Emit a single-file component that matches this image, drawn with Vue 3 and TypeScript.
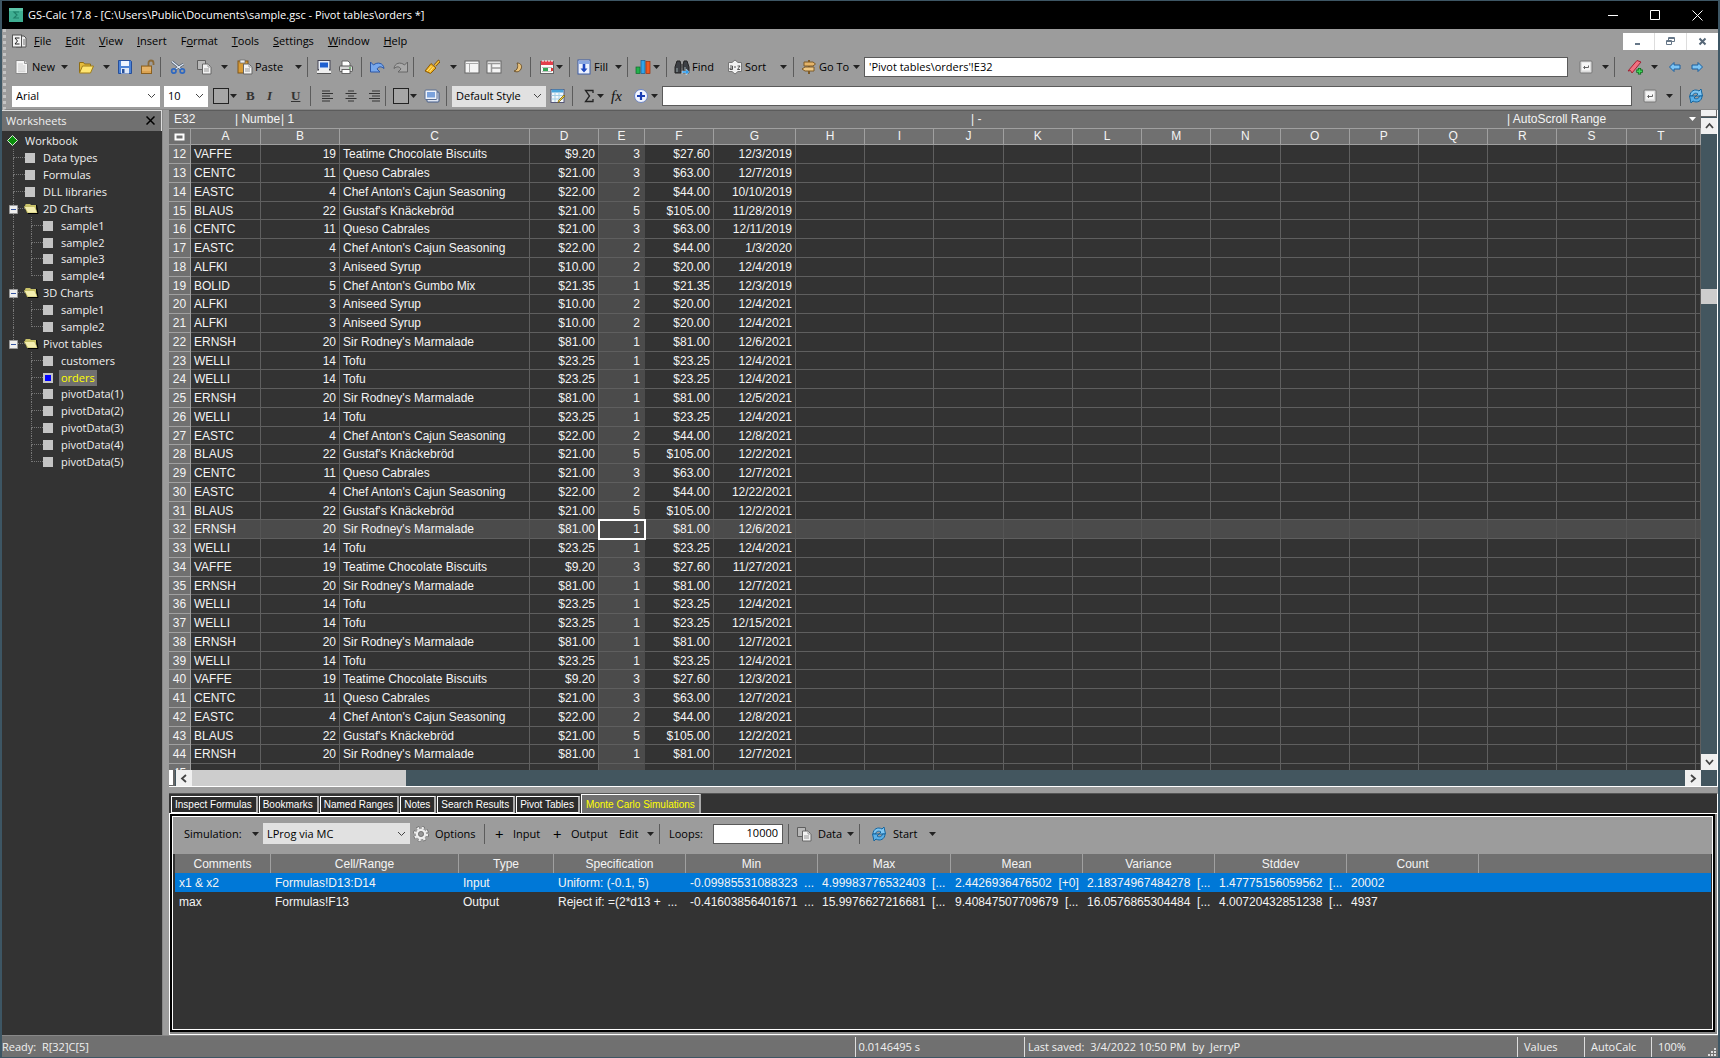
<script setup lang="ts">
import { h, type FunctionalComponent } from 'vue'

type Kind = 'btn' | 'drop' | 'sep' | 'select' | 'input' | 'text'
interface Tool {
  kind: Kind
  w: number
  icon?: string
  label?: string
  name?: string
  look?: string
  value?: string
}

const icons: Record<string, string> = {
  app: '<rect x="1" y="1" width="14" height="14" fill="#3fae92"/><path d="M1 1h14v3H1z" fill="#5cc4a8"/><path d="M11 5H6l3 3-3 3h5" fill="none" stroke="#1f7f68" stroke-width="1.2"/>',
  doc: '<path d="M5 3h8l2 2v9H5z" fill="#eee" stroke="#555"/><rect x="1.500" y="2" width="9" height="12" fill="#f4f4f4" stroke="#555"/><path d="M8.500 5H4l2.500 3L4 11h4.500" fill="none" stroke="#222"/><path d="M12 7h2M12 9h2M12 11h2" stroke="#777"/>',
  new: '<path d="M2 1.500h8.500l3 3v10H2z" fill="#f6f6f6" stroke="#888"/><path d="M10.500 1.500v3h3" fill="#ddd" stroke="#999"/><path d="M4 5h5M4 7h7.500M4 9h7.500M4 11h7.500M4 12.700h7.500" stroke="#c2c2c2" stroke-width=".8"/>',
  open: '<path d="M1.500 14V3.500h4l1 1.500h6v3" fill="#e6bd3d" stroke="#8f6d12"/><path d="M1.500 14 4.500 7h11l-3 7z" fill="#ffe672" stroke="#a17d18"/>',
  save: '<path d="M1.500 1.500h12l1 1v12h-13z" fill="#4d83d6" stroke="#264f9b"/><rect x="4" y="2" width="8" height="5" fill="#eef4ff"/><rect x="4" y="9" width="8" height="5.500" fill="#dfe8f7"/><rect x="5" y="10" width="2.500" height="4" fill="#28509a"/>',
  lock: '<path d="M8.500 7V4a2.500 2.500 0 0 1 5 0v2" fill="none" stroke="#8a6a3a" stroke-width="1.800"/><rect x="1.500" y="7" width="10" height="7.500" fill="#dba352" stroke="#8a6021"/><path d="M2 9h9M2 11h9" stroke="#f0c27c"/>',
  cut: '<path d="M2 2.500l9.500 8M13.500 5 5 10.500" stroke="#4a5a70" stroke-width="2.600"/><path d="M2 2.500l9.500 8M13.500 5 5 10.500" stroke="#e4ecf6" stroke-width="1.200"/><circle cx="3.800" cy="12" r="2.200" fill="none" stroke="#2f68c0" stroke-width="1.700"/><circle cx="12.300" cy="12" r="2.200" fill="none" stroke="#2f68c0" stroke-width="1.700"/>',
  copy: '<path d="M1.500 1.500h8v9h-8z" fill="#b9b9b9" stroke="#5e5e5e"/><path d="M6.500 5h5.500l3 3v7H6.500z" fill="#f2f2f2" stroke="#666"/><path d="M12 5v3h3M8 10h5M8 12h5" fill="none" stroke="#999"/>',
  paste: '<rect x="1" y="2" width="10" height="12" fill="#d89b35" stroke="#80571a"/><rect x="3" y="1" width="5" height="3" fill="#eee" stroke="#666" stroke-width=".7"/><path d="M6.500 5h5.500l3 3v7H6.500z" fill="#f5f5f5" stroke="#666"/><path d="M12 5v3h3M8 10h5M8 12h5" fill="none" stroke="#999"/>',
  monitor: '<rect x="2" y="1.500" width="12" height="9" fill="#e8eef8" stroke="#445"/><rect x="4" y="3.500" width="8" height="5" fill="#1e5fd0"/><path d="M1 13h14M3 11h10" stroke="#eee" stroke-width="2"/><path d="M1 14.500h14" stroke="#555"/>',
  print: '<path d="M4 7V2h6l2 2v3" fill="#fff" stroke="#666"/><rect x="1.500" y="7" width="13" height="5.500" rx="1" fill="#d7d7d7" stroke="#555"/><rect x="4" y="10.500" width="8" height="4" fill="#fff" stroke="#666"/><path d="M11 9h2" stroke="#292"/>',
  undo: '<path d="M1.500 3v10H11L8 10c1.500-2.500 4-3 7-.5C14.500 4 8.500 2.500 4.500 6z" fill="#78a8ec" stroke="#2c57a6"/>',
  redo: '<path d="M14.500 3v10H5l3-3C6.500 7.500 4 7 1 9.500 1.500 4 7.500 2.500 11.500 6z" fill="#a9a9a9" stroke="#666"/>',
  brush: '<path d="M15.500 1.500 11 6.500" stroke="#7b4e0c" stroke-width="3"/><path d="M15 2 11 6.500" stroke="#f5c33d" stroke-width="1.500"/><path d="M7 4.500l5 4.500-5.500 5.500L1 12z" fill="#f2b41f" stroke="#8a5a08"/><path d="M3 12l4.500-5M5.500 13l4-5" stroke="#ffe488"/>',
  pane: '<rect x="1" y="2" width="14" height="12" fill="#f5f5f5" stroke="#666"/><path d="M1.500 4.500h13M5.500 4v10" stroke="#aaa"/>',
  split: '<rect x="1" y="2" width="14" height="12" fill="#f5f5f5" stroke="#666"/><path d="M1.500 4.500h13M5.500 4v10M5.500 9h9.500" stroke="#999" stroke-width="1.500"/>',
  moon: '<path d="M5 4c4 0 5.500 3 4 6-1.500 3-4.500 3.500-7 2 3.500-.5 4.500-5 3-8z" fill="#e9c27b" stroke="#6f5630"/>',
  calendar: '<rect x="1.500" y="2.500" width="13" height="12" fill="#fafafa" stroke="#666"/><rect x="2" y="2" width="12" height="4" fill="#e23f4c"/><path d="M4 1v2M7 1v2M10 1v2M13 1v2" stroke="#fff"/><path d="M3 8.500h10M3 12.500h10" stroke="#bbb"/><rect x="4" y="9" width="5" height="3" fill="#35a455"/><path d="M13 9v3" stroke="#d33" stroke-width="2"/>',
  fill: '<rect x="2" y="1" width="12" height="14" fill="#eef3ff" stroke="#3d5da5"/><path d="M2.500 3.500h11" stroke="#8aa7e0" stroke-width="3"/><path d="M8 5v7" stroke="#1e49c0" stroke-width="2.600"/><path d="M4.500 9.500h7L8 13.500z" fill="#1e49c0"/>',
  chart: '<rect x="1" y="8" width="4" height="6.500" fill="#22b14c" stroke="#0c6b2a" stroke-width=".7"/><rect x="6" y="1.500" width="4" height="13" fill="#2fa4ea" stroke="#155c94" stroke-width=".7"/><rect x="11" y="2.500" width="4" height="12" fill="#ee5a24" stroke="#9a2f0a" stroke-width=".7"/>',
  find: '<path d="M3 2h3l1 4v8H1V8zM10 2h3l2 6v6H9V6z" fill="#3c3f44" stroke="#222"/><path d="M7 5h2v4H7z" fill="#555"/><path d="M3 9v4M11 8v3" stroke="#9aa"/><path d="M8 12h4v-2l3.500 3-3.500 3v-2H8z" fill="#2f9bea" stroke="#fff" stroke-width=".4"/>',
  sort: '<path d="M1.500 3.500H5L8 1l3 2.500h3.500v9H11L8 15l-3-2.500H1.500z" fill="#f2f2f2" stroke="#777"/><path d="M3 7h2.500v3.500H3V9h2.500M10.500 7H13l-2.500 3.500H13M7 8h2" fill="none" stroke="#444" stroke-width=".9"/>',
  goto: '<path d="M8 1v14" stroke="#7d5a28" stroke-width="2"/><path d="M3 3h9l2.500 2L12 7H3z" fill="#e5b56a" stroke="#7d5a28"/><path d="M13 8H4L1 10l3 2h9z" fill="#f0c984" stroke="#7d5a28"/>',
  enter: '<rect x="2" y="2" width="12" height="12" rx="1" fill="#ddd" stroke="#777"/><rect x="4" y="3.500" width="8" height="8" fill="#f6f6f6"/><path d="M10.500 6.500v2H6M7 7 5.500 8.500 7 10" fill="none" stroke="#666"/>',
  bookmark: '<path d="M10 1.500 14 3 5 14l-1.500-2.500L1 12z" fill="#f27080" stroke="#a32233"/><path d="M12.500 9v6.500M9.300 12.200h6.500" stroke="#0b6b1b" stroke-width="3.200"/><path d="M12.500 9.700v5M10 12.200h5" stroke="#3fd257" stroke-width="1.600"/>',
  back: '<path d="M2.500 8 7 3.500V6h6v4H7v2.500z" fill="#7cc4f4" stroke="#1a5f9e"/>',
  forward: '<path d="M13.500 8 9 3.500V6H3v4h6v2.500z" fill="#7cc4f4" stroke="#1a5f9e"/>',
  swatch: '<rect x=".5" y=".5" width="15" height="15" fill="#a6a6a6" stroke="#222"/>',
  left: '<path d="M2 3h8M2 5.500h11M2 8h8M2 10.500h11M2 13h8" stroke="#333" stroke-width="1.200"/>',
  center: '<path d="M5 3h6M2.500 5.500h11M5 8h6M2.500 10.500h11M5 13h6" stroke="#333" stroke-width="1.200"/>',
  right: '<path d="M6 3h8M3 5.500h11M6 8h8M3 10.500h11M6 13h8" stroke="#333" stroke-width="1.200"/>',
  frame: '<rect x="3" y="4" width="12" height="10" rx="1" fill="#dfe6f2" stroke="#445d8a"/><rect x="1" y="2" width="12" height="9.500" rx="1" fill="#f0f4fb" stroke="#5a6e92"/><rect x="3" y="4" width="8" height="5.500" fill="#7ba2dc"/>',
  style: '<rect x="1" y="1.500" width="13" height="13" fill="#f3f8fb" stroke="#557"/><path d="M1.500 3h12" stroke="#49a5dc" stroke-width="3"/><path d="M5 4v10M9 4v10M1.500 7.500h12M1.500 11h12" stroke="#a5cfe6"/><path d="M15 8 9.500 13.500 8 15l.5-2.500L14 7z" fill="#f3d13e" stroke="#7d6410" stroke-width=".8"/>',
  sigma: '<path d="M12 5V2.500H4.500L8.500 8l-4 5.500H12V11" fill="none" stroke="#222" stroke-width="1.300"/>',
  plus: '<circle cx="8" cy="8" r="6.500" fill="#f2f5ff" stroke="#6e86c4"/><path d="M8 4v8M4 8h8" stroke="#1b3fb4" stroke-width="2.200"/>',
  refresh: '<path d="M2 8C2 3 7 .5 11 3l2-2 1.500 7H8l2-2C8 4.500 5 5 4.500 8z" fill="#7fc6f2" stroke="#15659f"/><path d="M14 8c0 5-5 7.500-9 5l-2 2-1.500-7H8l-2 2c2 1.500 5 1 5.500-2z" fill="#5bb0e8" stroke="#15659f"/>',
  gear: '<circle cx="8" cy="8" r="6.200" fill="none" stroke="#666" stroke-width="3.400" stroke-dasharray="2.600 2.270"/><circle cx="8" cy="8" r="6" fill="none" stroke="#eee" stroke-width="2.400" stroke-dasharray="2.200 2.512"/><circle cx="8" cy="8" r="4" fill="none" stroke="#eee" stroke-width="2.400"/><circle cx="8" cy="8" r="2.500" fill="#999" stroke="#666" stroke-width=".7"/>',
}

const sep = (w: number): Tool => ({ kind: 'sep', w })
const drop = (w: number): Tool => ({ kind: 'drop', w })
const btn = (icon: string, w: number, label?: string): Tool => ({ kind: 'btn', icon, w, label, name: icon })
const glyph = (label: string, look: string, w: number, name: string): Tool => ({ kind: 'btn', label, look, w, name })

const ToolStrip: FunctionalComponent<{ items: Tool[] }> = (props) =>
  props.items.map((t) => {
    const style = t.w ? { width: t.w + 'px' } : {}
    if (t.kind === 'sep') return h('span', { class: 'sep', style })
    if (t.kind === 'text') return h('span', { class: 'caption', style }, t.label)
    if (t.kind === 'drop')
      return h('button', { class: 'tool', style, 'aria-label': 'More' }, [
        h('svg', { width: 7, height: 4, viewBox: '0 0 7 4', innerHTML: '<path d="M0 0h7L3.500 4z" fill="#222"/>' }),
      ])
    if (t.kind === 'input')
      return h('input', { class: ['field', t.w ? 'fixed' : 'wide'], style, value: t.value, 'aria-label': t.name })
    if (t.kind === 'select')
      return h('span', { class: ['combo', t.look], style }, [
        h('select', { 'aria-label': t.name }, [h('option', t.value)]),
        h('svg', { width: 9, height: 6, viewBox: '0 0 9 6', innerHTML: '<path d="M1 1l3.500 3.500L8 1" fill="none" stroke="#444"/>' }),
      ])
    return h('button', { class: 'tool', style, 'aria-label': t.label ?? t.name }, [
      t.icon ? h('svg', { width: 16, height: 16, viewBox: '0 0 16 16', innerHTML: icons[t.icon] }) : null,
      t.label ? h('span', { class: t.look }, t.label) : null,
    ])
  })
ToolStrip.props = ['items']

const mainBar: Tool[] = [
  btn('new', 47, 'New'), drop(17), btn('open', 25), drop(14), btn('save', 23), btn('lock', 20), sep(10),
  btn('cut', 26), btn('copy', 25), drop(16), btn('paste', 58, 'Paste'), drop(12), sep(9),
  btn('monitor', 22), btn('print', 23), sep(8), btn('undo', 24), btn('redo', 20), sep(11),
  btn('brush', 26), drop(14), btn('pane', 22), btn('split', 26), btn('moon', 18), sep(9),
  btn('calendar', 17), drop(13), sep(7), btn('fill', 39, 'Fill'), drop(12), sep(8),
  btn('chart', 18), drop(13), sep(8), btn('find', 53, 'Find'), btn('sort', 53, 'Sort'), drop(13), sep(8),
  btn('goto', 52, 'Go To'), drop(11),
  { kind: 'input', w: 0, value: "'Pivot tables\\orders'!E32", name: 'Address' },
  { kind: 'text', w: 10 }, btn('enter', 24), drop(12), sep(13), btn('bookmark', 24), drop(16), btn('back', 22), btn('forward', 29),
]

const formatBar: Tool[] = [
  { kind: 'select', w: 148, value: 'Arial', name: 'Font' },
  { kind: 'text', w: 4 },
  { kind: 'select', w: 44, value: '10', name: 'Font size' },
  { kind: 'text', w: 5 },
  btn('swatch', 17), drop(16), glyph('B', 'bold', 21, 'Bold'), glyph('I', 'italic', 24, 'Italic'),
  glyph('U', 'under', 19, 'Underline'), sep(10),
  btn('left', 23), btn('center', 23), btn('right', 19), sep(8), btn('swatch', 17), drop(14), btn('frame', 22), sep(6),
  { kind: 'select', w: 94, value: 'Default Style', name: 'Style', look: 'pale' },
  { kind: 'text', w: 4 },
  btn('style', 22), sep(9), btn('sigma', 16), drop(14), glyph('fx', 'fx', 22, 'Function'), btn('plus', 18), drop(11),
  { kind: 'input', w: 0, value: '', name: 'Formula' },
  { kind: 'text', w: 10 }, btn('enter', 24), drop(14), sep(8), btn('refresh', 30),
]

const simBar: Tool[] = [
  { kind: 'text', w: 68, label: 'Simulation:' }, drop(11),
  { kind: 'select', w: 147, value: 'LProg via MC', name: 'Simulation', look: 'pale' },
  { kind: 'text', w: 3 },
  btn('gear', 71, 'Options'), sep(11), glyph('+', 'cross', 18, 'Add input'), glyph('Input', '', 40, 'Input'),
  glyph('+', 'cross', 18, 'Add output'), glyph('Output', '', 48, 'Output'), glyph('Edit', '', 28, 'Edit'), drop(12), sep(10),
  { kind: 'text', w: 44, label: 'Loops:' }, { kind: 'input', w: 70, value: '10000', name: 'Loops' },
  { kind: 'text', w: 5 }, sep(8),
  btn('copy', 51, 'Data'), drop(12), sep(12), btn('refresh', 58, 'Start'), drop(12),
]

const menus = ['File', 'Edit', 'View', 'Insert', 'Format', 'Tools', 'Settings', 'Window', 'Help'].map((m) => {
  const at = m === 'Format' ? 1 : 0
  return { a: m.slice(0, at), key: m[at], b: m.slice(at + 1) }
})

interface Node { label: string; level: number; folder?: boolean; last?: boolean; rail?: boolean; on?: boolean }
const kids = (names: string[], rail: boolean): Node[] =>
  names.map((label, i) => ({ label, level: 2, rail, last: i === names.length - 1, on: label === 'orders' }))
const tree: Node[] = [
  { label: 'Data types', level: 1 }, { label: 'Formulas', level: 1 }, { label: 'DLL libraries', level: 1 },
  { label: '2D Charts', level: 1, folder: true }, ...kids(['sample1', 'sample2', 'sample3', 'sample4'], true),
  { label: '3D Charts', level: 1, folder: true }, ...kids(['sample1', 'sample2'], true),
  { label: 'Pivot tables', level: 1, folder: true, last: true },
  ...kids(['customers', 'orders', 'pivotData(1)', 'pivotData(2)', 'pivotData(3)', 'pivotData(4)', 'pivotData(5)'], false),
]

const letters = 'ABCDEFGHIJKLMNOPQRST'.split('')
const fixedCols = [22, 70, 79, 190, 69, 46, 69, 82]
const blanks = Array.from({ length: 14 })

const lines: Record<string, string[]> = {
  VAFFE: ['19', 'Teatime Chocolate Biscuits', '$9.20', '3', '$27.60'],
  CENTC: ['11', 'Queso Cabrales', '$21.00', '3', '$63.00'],
  EASTC: ['4', "Chef Anton's Cajun Seasoning", '$22.00', '2', '$44.00'],
  BLAUS: ['22', "Gustaf's Knäckebröd", '$21.00', '5', '$105.00'],
  ALFKI: ['3', 'Aniseed Syrup', '$10.00', '2', '$20.00'],
  BOLID: ['5', "Chef Anton's Gumbo Mix", '$21.35', '1', '$21.35'],
  ERNSH: ['20', "Sir Rodney's Marmalade", '$81.00', '1', '$81.00'],
  WELLI: ['14', 'Tofu', '$23.25', '1', '$23.25'],
}
const orders = `VAFFE 12/3/2019,CENTC 12/7/2019,EASTC 10/10/2019,BLAUS 11/28/2019,CENTC 12/11/2019,EASTC 1/3/2020,
ALFKI 12/4/2019,BOLID 12/3/2019,ALFKI 12/4/2021,ALFKI 12/4/2021,ERNSH 12/6/2021,WELLI 12/4/2021,WELLI 12/4/2021,
ERNSH 12/5/2021,WELLI 12/4/2021,EASTC 12/8/2021,BLAUS 12/2/2021,CENTC 12/7/2021,EASTC 12/22/2021,BLAUS 12/2/2021,
ERNSH 12/6/2021,WELLI 12/4/2021,VAFFE 11/27/2021,ERNSH 12/7/2021,WELLI 12/4/2021,WELLI 12/15/2021,ERNSH 12/7/2021,
WELLI 12/4/2021,VAFFE 12/3/2021,CENTC 12/7/2021,EASTC 12/8/2021,BLAUS 12/2/2021,ERNSH 12/7/2021`
const rows = orders.split(',').map((o, i) => {
  const [code, date] = o.trim().split(' ')
  return { n: i + 12, cells: [code, ...lines[code], date] }
})
rows.push({ n: 45, cells: ['', '', '', '', '', '', ''] })

const tabs = ['Inspect Formulas', 'Bookmarks', 'Named Ranges', 'Notes', 'Search Results', 'Pivot Tables', 'Monte Carlo Simulations']
const simCols = ['Comments', 'Cell/Range', 'Type', 'Specification', 'Min', 'Max', 'Mean', 'Variance', 'Stddev', 'Count', '']
const simWidths = [96, 188, 95, 132, 132, 133, 132, 132, 132, 132]
const simRows = [
  ['x1 & x2', 'Formulas!D13:D14', 'Input', 'Uniform: (-0.1, 5)', '-0.09985531088323\u00a0 ...', '4.99983776532403\u00a0 [...', '2.4426936476502\u00a0 [+0]', '2.18374967484278\u00a0 [...', '1.47775156059562\u00a0 [...', '20002', ''],
  ['max', 'Formulas!F13', 'Output', 'Reject if: =(2*d13 +\u00a0 ...', '-0.41603856401671\u00a0 ...', '15.9976627216681\u00a0 [...', '9.40847507709679\u00a0 [...', '16.0576865304484\u00a0 [...', '4.00720432851238\u00a0 [...', '4937', ''],
]
</script>

<template>
  <div class="window">
    <header class="title">
      <svg width="16" height="16" viewBox="0 0 16 16" v-html="icons.app" />
      <h1>GS-Calc 17.8 - [C:\Users\Public\Documents\sample.gsc - Pivot tables\orders *]</h1>
      <button aria-label="Minimize"><svg width="11" height="11"><path d="M0 5.5h10" stroke="#fff" /></svg></button>
      <button aria-label="Maximize"><svg width="11" height="11"><path d="M.5.5h9v9h-9z" fill="none" stroke="#fff" /></svg></button>
      <button aria-label="Close"><svg width="11" height="11"><path d="M.5.5l10 10M10.5.5l-10 10" stroke="#fff" /></svg></button>
    </header>

    <div class="bars">
      <nav class="menu">
        <svg width="16" height="16" viewBox="0 0 16 16" v-html="icons.doc" />
        <button v-for="m in menus" :key="m.key + m.b">{{ m.a }}<u>{{ m.key }}</u>{{ m.b }}</button>
        <div class="mdi">
          <button aria-label="Minimize document"><svg width="9" height="9"><path d="M1 7h5" stroke="#678" stroke-width="2" /></svg></button>
          <button aria-label="Restore document"><svg width="9" height="9"><path d="M2.500 3V.5h6v4H6M.5 3.500h5v4h-5zM2.500 1.500h6M.5 4.500h5" fill="none" stroke="#678" /></svg></button>
          <button aria-label="Close document"><svg width="9" height="9"><path d="M1.500 1.500l6 6M7.500 1.500l-6 6" stroke="#567" stroke-width="2" /></svg></button>
        </div>
      </nav>
      <div class="bar main"><ToolStrip :items="mainBar" /></div>
      <div class="bar format"><ToolStrip :items="formatBar" /></div>
    </div>

    <div class="body">
      <aside class="side">
        <div class="side-head">
          <h2>Worksheets</h2>
          <button aria-label="Close panel"><svg width="9" height="9"><path d="M.5.5l8 8M8.500.5l-8 8" stroke="#000" stroke-width="1.500" /></svg></button>
        </div>
        <ul class="tree">
          <li class="root">
            <svg width="11" height="11"><path d="M5.500.5l5 5-5 5-5-5z" fill="#0a8f0a" stroke="#d8f0d8" /></svg>
            <span>Workbook</span>
          </li>
          <li v-for="(n, i) in tree" :key="i">
            <i v-if="n.level === 2" class="rail" :class="{ none: !n.rail }"><b></b><b></b></i>
            <i class="branch" :class="{ last: n.last }">
              <b></b><b></b>
              <svg v-if="n.folder" class="toggle" width="9" height="9"><path d="M.5.5h8v8h-8z" fill="#eee" stroke="#999" /><path d="M2 4.500h5" stroke="#3454a0" /></svg>
            </i>
            <svg v-if="n.folder" class="folder" width="15" height="11"><path d="M1 2l1-1h4l1 1h5v8H3z" fill="#c9c26a" /><path d="M0 3.500h10.500L13.500 10H4z" fill="#f4eeb0" stroke="#b5ae4e" stroke-width=".6" /><path d="M12.500 2l1.500 8.500H4" fill="none" stroke="#000" /></svg>
            <em v-else class="sheet" :class="{ on: n.on }"></em>
            <span :class="{ on: n.on }">{{ n.label }}</span>
          </li>
        </ul>
      </aside>

      <main class="work">
        <section class="sheetview">
          <div class="grid-side">
            <div class="info">
              <span>E32</span><span>| Numbe</span><span>| 1</span><span>| -</span><span>| AutoScroll Range</span>
              <svg width="7" height="4"><path d="M0 0h7L3.500 4z" fill="#fff" /></svg>
            </div>
            <div class="scroller">
              <table class="cells">
                <colgroup>
                  <col v-for="(w, i) in fixedCols" :key="i" :style="{ width: w + 'px' }" />
                  <col v-for="i in 13" :key="'x' + i" />
                  <col class="tail" />
                </colgroup>
                <thead>
                  <tr>
                    <th><svg width="11" height="8"><path d="M1.500 1.500h8v5h-8z" fill="#707070" stroke="#fff" stroke-width="2" /></svg></th>
                    <th v-for="l in letters" :key="l">{{ l }}</th>
                    <th></th>
                  </tr>
                </thead>
                <tbody>
                  <tr v-for="r in rows" :key="r.n" :class="{ current: r.n === 32 }">
                    <th>{{ r.n }}</th>
                    <td v-for="(c, i) in r.cells" :key="i" :class="{ num: i !== 0 && i !== 2, col: i === 4, cursor: i === 4 && r.n === 32 }">{{ c }}</td>
                    <td v-for="(_, i) in blanks" :key="'b' + i"></td>
                  </tr>
                </tbody>
              </table>
            </div>
            <div class="hscroll">
              <i class="split"></i>
              <button aria-label="Scroll left"><svg width="8" height="9"><path d="M6 1L2 4.500 6 8" fill="none" stroke="#444" stroke-width="1.800" /></svg></button>
              <i class="thumb"></i>
              <button class="end" aria-label="Scroll right"><svg width="8" height="9"><path d="M2 1l4 3.500L2 8" fill="none" stroke="#444" stroke-width="1.800" /></svg></button>
            </div>
          </div>
          <div class="vscroll">
            <i class="split"></i>
            <button aria-label="Scroll up"><svg width="9" height="8"><path d="M1 6l3.500-4L8 6" fill="none" stroke="#444" stroke-width="1.800" /></svg></button>
            <i class="thumb"></i>
            <button class="end" aria-label="Scroll down"><svg width="9" height="8"><path d="M1 2l3.500 4L8 2" fill="none" stroke="#444" stroke-width="1.800" /></svg></button>
          </div>
        </section>

        <section class="dock">
          <div class="tabs" role="tablist">
            <button v-for="(t, i) in tabs" :key="t" role="tab" :aria-selected="i === 6" :class="{ active: i === 6 }">{{ t }}</button>
          </div>
          <div class="frame">
            <div class="panel">
              <div class="bar sim"><ToolStrip :items="simBar" /></div>
              <table class="results">
                <colgroup>
                  <col v-for="(w, i) in simWidths" :key="i" :style="{ width: w + 'px' }" />
                  <col />
                </colgroup>
                <thead><tr><th v-for="(c, i) in simCols" :key="i">{{ c }}</th></tr></thead>
                <tbody>
                  <tr v-for="(r, i) in simRows" :key="i" :class="{ picked: i === 0 }">
                    <td v-for="(c, j) in r" :key="j">{{ c }}</td>
                  </tr>
                </tbody>
              </table>
            </div>
          </div>
        </section>
      </main>
    </div>

    <footer class="status">
      <span class="s1">Ready:&nbsp; R[32]C[5]</span>
      <span class="s2">0.0146495 s</span>
      <span class="s3">Last saved:&nbsp; 3/4/2022 10:50 PM&nbsp; by&nbsp; JerryP</span>
      <span class="s4">Values</span>
      <span class="s4">AutoCalc</span>
      <span class="s4">100%</span>
      <svg class="grip" width="9" height="9"><path d="M6 1h2M6 4h2M3 4h2M6 7h2M3 7h2M0 7h2" stroke="#ddd" stroke-width="2" /></svg>
    </footer>
  </div>
</template>

<style>
body { margin: 0; background: #000; }
</style>

<style scoped>
.window {
  box-sizing: border-box;
  height: 100vh;
  display: flex;
  flex-direction: column;
  border: solid #3d5664;
  border-width: 1px 2px 1px 2px;
  background: #9c9c9c;
  font-family: "Open Sans", "Noto Sans", sans-serif;
  font-size: 11px;
  line-height: 16px;
  color: #000;
  overflow: hidden;
}
.window :deep(button) { border: 0; padding: 0; background: none; font: inherit; color: inherit; }
h1, h2 { margin: 0; font-size: 11px; font-weight: 400; }
svg { display: block; }

.title { height: 28px; flex: none; display: flex; align-items: center; background: #000; color: #fff; padding: 0 0 0 6px; }
.title h1 { flex: 1; margin-left: 4px; }
.title button { width: 42px; height: 28px; display: grid; place-items: center; }

.bars { flex: none; background: #9c9c9c; border-bottom: 1px solid #888; border-left: 3px dotted #c4c4c4; margin-left: 1px; }
.menu { display: flex; align-items: center; height: 24px; padding-left: 5px; }
.menu > button { margin: 0 0 0 14px; }
.menu > svg + button { margin-left: 7px; }
.mdi { margin-left: auto; display: flex; gap: 1px; background: #ddd; }
.mdi button { width: 31px; height: 17px; display: grid; place-items: center; background: #fff; }
.bar { display: flex; align-items: center; height: 28px; }
.main { padding-left: 8px; }
.format { padding: 2px 0 0 6px; box-sizing: border-box; }
.bar :deep(.tool) { flex: none; height: 22px; display: flex; align-items: center; gap: 2px; white-space: nowrap; text-align: left; }
.bar :deep(.tool svg) { flex: none; display: block; }
.bar :deep(.sep) { flex: none; height: 20px; box-sizing: border-box; border-left: 1px solid #5c5c5c; }
.bar :deep(.caption) { flex: none; white-space: nowrap; }
.bar :deep(.field) { box-sizing: border-box; height: 20px; border: 1px solid #5a5a5a; background: #fff; padding: 0 4px 2px; font: inherit; color: #000; border-radius: 0; }
.bar :deep(.wide) { flex: 1; min-width: 0; }
.bar :deep(.fixed) { text-align: right; }
.bar :deep(.combo) { flex: none; height: 21px; display: grid; align-items: center; background: #fff; }
.bar :deep(.combo > *) { grid-area: 1 / 1; }
.bar :deep(.combo.pale) { background: #e1e1e1; }
.bar :deep(.combo svg) { justify-self: end; margin-right: 4px; pointer-events: none; }
.bar :deep(select) { appearance: none; width: 100%; height: 21px; border: 0; padding: 0 4px; background: transparent; font: inherit; color: #000; }
.bar :deep(.bold) { font: 700 13px/16px "Liberation Serif", serif; color: #333; }
.bar :deep(.italic) { font: italic 700 13px/16px "Liberation Serif", serif; color: #333; }
.bar :deep(.under) { font: 700 13px/16px "Liberation Serif", serif; color: #333; text-decoration: underline; }
.bar :deep(.fx) { font: italic 15px/16px "Liberation Serif", serif; color: #111; }
.bar :deep(.cross) { font-size: 15px; }

.body { flex: 1; min-height: 0; display: flex; gap: 6px; }
.side { width: 160px; flex: none; background: #333; color: #f0f0f0; border-right: 1px solid #888; }
.side-head { box-sizing: border-box; height: 21px; display: flex; align-items: center; justify-content: space-between; border: solid #ddd; border-width: 1px 1px 0 0; background: #707070; padding: 0 6px 1px 4px; }
.tree { list-style: none; margin: 0; padding: 1px 0; }
.tree li { display: flex; align-items: center; height: 17px; padding-left: 11px; }
.tree li:nth-child(8n) { height: 16px; }
.tree .root { padding-left: 5px; gap: 5px; }
.tree li > span { padding: 0 2px; line-height: 16px; }
.tree span.on { background: #707070; color: #ff0; }
.rail, .branch { flex: none; align-self: stretch; display: grid; grid-template-rows: 1fr 1fr; }
.rail { width: 18px; }
.branch { width: 12px; position: relative; }
.rail b, .branch b { border-left: 1px dotted #777; }
.rail.none b { border-color: transparent; }
.branch b:first-child { border-bottom: 1px dotted #777; }
.branch.last b:nth-child(2) { border-left-color: transparent; }
.toggle { position: absolute; left: -4px; top: 5px; }
.sheet { width: 10px; height: 10px; flex: none; box-sizing: border-box; background: #c4c4c4; margin-right: 6px; }
.sheet.on { background: #00f; border: 2px solid #c4c4c4; }
.folder { flex: none; margin: 0 2px 0 -1px; }

.work { flex: 1; min-width: 0; display: flex; flex-direction: column; }
.sheetview { flex: 1; min-height: 0; display: flex; border-right: 1px solid #fff; border-bottom: 1px solid #fff; }
.grid-side { flex: 1; min-width: 0; display: flex; flex-direction: column; font: 12px/16px "Liberation Sans", Arial, sans-serif; color: #f4f4f4; }
.info { flex: none; height: 18px; display: grid; grid-template-columns: 61px 46px 690fr 536fr 182px 12px; align-items: center; padding: 0 0 1px 5px; background: #707070; border-top: 1px solid #5c5c5c; box-sizing: border-box; }
.scroller { flex: 1; min-height: 0; overflow: hidden; background: #333; }
.cells { width: 100%; table-layout: fixed; border-collapse: separate; border-spacing: 0; }
.cells .tail { width: 5px; }
.cells th, .cells td { box-sizing: border-box; padding: 0; font-weight: 400; line-height: 16px; white-space: nowrap; overflow: hidden; border: solid #5f5f5f; border-width: 0 1px 1px 0; }
.cells thead th { height: 17px; background: #707070; border-color: #a0a0a0; border-top-width: 1px; line-height: 15px; }
.cells thead svg { margin: 0 auto; }
.cells tbody th { height: 19px; background: #707070; border-color: #a0a0a0; }
.cells tbody td { padding: 0 3px; height: 19px; }
.cells tbody tr:nth-child(4n) > * { height: 18px; }
.cells .num { text-align: right; }
.cells .col { background: #4b4b4b; padding-right: 4px; border-right-color: #4b4b4b; }
.cells .current td { background: #4b4b4b; border-right-color: #555; }
.cells td.cursor { outline: 2px solid #fff; outline-offset: -1px; }

.hscroll { flex: none; height: 16px; display: flex; background: #43565f; }
.hscroll .split { width: 6px; box-sizing: border-box; background: #fff; border: solid #666; border-width: 0 2px 1px 0; margin-right: 1px; }
.hscroll button, .vscroll button { width: 16px; height: 16px; flex: none; display: grid; place-items: center; background: #f0f0f0; }
.hscroll .thumb { width: 214px; background: #cdcdcd; }
.hscroll .end { margin-left: auto; }
.vscroll { width: 16px; flex: none; display: flex; flex-direction: column; background: #43565f; }
.vscroll .split { height: 7px; box-sizing: border-box; background: #f0f0f0; border: solid #666; border-width: 0 1px 1px 0; margin-bottom: 1px; }
.vscroll .thumb { height: 15px; margin-top: 155px; background: #cdcdcd; }
.vscroll .end { margin-top: auto; margin-bottom: 16px; }

.dock { flex: none; margin-top: 6px; background: #333; border-right: 1px solid #fff; border-bottom: 1px solid #fff; border-top: 1px solid #555; }
.tabs { display: flex; align-items: flex-end; gap: 1px; height: 19px; padding-left: 2px; font: 10px/14px "Liberation Sans", Arial, sans-serif; color: #fff; }
.tabs button { height: 17px; box-sizing: border-box; border: solid #fff; border-width: 1px 2px 1px 1px; border-right-color: #aaa; padding: 0 4px 0 3px; background: #2c2c2c; }
.tabs button.active { height: 19px; border-bottom: 0; background: #707070; color: #ff0; padding: 2px 4px 0; }
.frame { border: solid #fff; border-width: 1px 0 0 1px; padding: 0 2px 2px 0; background: #8a8a8a; }
.panel { height: 214px; border: 2px solid #000; background: #333; outline: 1px solid #fff; outline-offset: -3px; }
.sim { height: 38px; background: #9c9c9c; border: solid #777; border-width: 1px 0 0 1px; padding: 0 0 4px 11px; box-sizing: border-box; }
.sim :deep(.tool) { gap: 6px; }
.results { width: calc(100% - 5px); margin-left: 3px; table-layout: fixed; border-collapse: separate; border-spacing: 0; font: 12px/18px "Liberation Sans", Arial, sans-serif; color: #f4f4f4; }
.results th { height: 19px; box-sizing: border-box; padding: 0; font-weight: 400; background: #707070; border-right: 1px solid #a0a0a0; }
.results th:last-child { border-right: 0; }
.results td { height: 19px; padding: 0 4px; white-space: pre; overflow: hidden; }
.results .picked td { background: #0078d7; }

.status { flex: none; height: 21px; display: flex; align-items: center; background: #707070; color: #f0f0f0; border-top: 1px solid #888; }
.status span { box-sizing: border-box; height: 20px; line-height: 20px; white-space: nowrap; }
.status span + span { border-left: 1px solid #ddd; padding-left: 3px; }
.s1 { flex: 856; }
.s2 { flex: 166; }
.s3 { flex: 491; }
.status .s4 { width: 67px; padding-left: 6px; }
.grip { align-self: flex-end; margin-left: -10px; margin-right: 1px; }
</style>
